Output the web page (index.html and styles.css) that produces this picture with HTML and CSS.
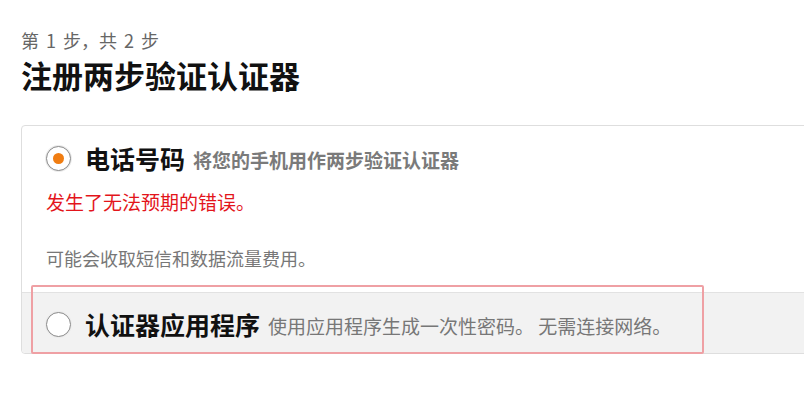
FILE: index.html
```html
<!DOCTYPE html>
<html lang="zh-CN">
<head>
<meta charset="utf-8">
<title>注册两步验证认证器</title>
<link rel="stylesheet" href="styles.css">
</head>
<body>
<main class="page">
  <p class="step">第 1 步，共 2 步</p>
  <h1 class="title">注册两步验证认证器</h1>
  <div class="card">
    <section class="option option-selected">
      <div class="option-row">
        <span class="radio radio-checked"></span>
        <span class="option-name">电话号码</span>
        <span class="option-desc option-desc-strong">将您的手机用作两步验证认证器</span>
      </div>
      <p class="error">发生了无法预期的错误。</p>
      <p class="note">可能会收取短信和数据流量费用。</p>
    </section>
    <section class="option option-alt">
      <div class="option-row">
        <span class="radio"></span>
        <span class="option-name">认证器应用程序</span>
        <span class="option-desc">使用应用程序生成一次性密码。 无需连接网络。</span>
      </div>
    </section>
    <div class="highlight"></div>
  </div>
  <div class="footer">
    <span class="footer-link">稍后设置</span>
    <span class="footer-link footer-next">继续</span>
  </div>
</main>
</body>
</html>
```
FILE: styles.css
```css
* { box-sizing: border-box; }
html, body {
  margin: 0;
  padding: 0;
  background: #ffffff;
  overflow: hidden;
}
body {
  font-family: "Noto Sans CJK SC", "Noto Sans", "Liberation Sans", sans-serif;
  color: #111;
}
.page {
  padding: 0 0 0 21px;
  width: 804px;
  height: 404px;
  overflow: hidden;
}
.step {
  margin: 30px 0 0;
  font-size: 18px;
  line-height: 20px;
  word-spacing: 3px;
  color: #666;
}
.title {
  margin: 7px 0 0;
  font-size: 31px;
  line-height: 36px;
  font-weight: 700;
  color: #111;
}
.card {
  position: relative;
  margin-top: 32px;
  margin-right: -30px;
  border: 1px solid #dedede;
  border-radius: 4px;
}
.option {
  padding-left: 24px;
}
.option-selected {
  padding-top: 17px;
  padding-bottom: 22px;
  height: 166px;
}
.option-alt {
  background: #f2f2f2;
  border-top: 1px solid #e2e2e2;
  padding-top: 16px;
  padding-bottom: 14px;
  border-radius: 0 0 4px 4px;
}
.option-row {
  display: flex;
  align-items: center;
  height: 30px;
}
.radio {
  flex: none;
  width: 25px;
  height: 25px;
  border: 1.5px solid #8a8a8a;
  border-radius: 50%;
  background: #fff;
  box-shadow: 0 0 0 1px #ececec;
  display: flex;
  align-items: center;
  justify-content: center;
  margin-right: 14px;
}
.radio-checked::after {
  content: "";
  width: 11px;
  height: 11px;
  border-radius: 50%;
  background: #f07d12;
}
.option-name {
  font-size: 25px;
  line-height: 30px;
  font-weight: 700;
  color: #111;
}
.option-desc {
  margin-left: 8px;
  margin-top: 3px;
  font-size: 19px;
  line-height: 26px;
  color: #777;
  white-space: nowrap;
}
.option-desc-strong {
  font-weight: 700;
  color: #7a7a7a;
}
.error {
  margin: 17px 0 0;
  font-size: 19px;
  line-height: 24px;
  color: #e3151b;
}
.note {
  margin: 33px 0 0;
  font-size: 18px;
  line-height: 22px;
  color: #777;
}
.highlight {
  position: absolute;
  left: 9px;
  top: 159px;
  width: 673px;
  height: 69px;
  border: 2px solid #efa0a4;
  border-radius: 2px;
  pointer-events: none;
}
.footer {
  display: flex;
  margin-top: 47px;
  padding-left: 47px;
  font-size: 18px;
  line-height: 22px;
  color: #dadada;
}
.footer-next {
  margin-left: 268px;
}
```
